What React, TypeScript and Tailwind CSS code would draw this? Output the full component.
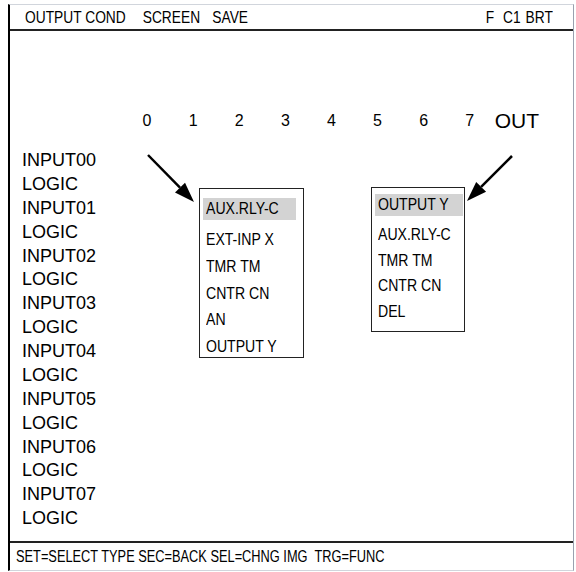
import React from "react";

const sans = "font-['Liberation_Sans',Arial,sans-serif]";

const rows = [0, 1, 2, 3, 4, 5, 6, 7].flatMap((n) => [`INPUT0${n}`, "LOGIC"]);
const leftMenu = ["AUX.RLY-C", "EXT-INP X", "TMR TM", "CNTR CN", "AN", "OUTPUT Y"];
const rightMenu = ["OUTPUT Y", "AUX.RLY-C", "TMR TM", "CNTR CN", "DEL"];

function Arrow({ x1, y1, x2, y2 }: { x1: number; y1: number; x2: number; y2: number }) {
  const a = Math.atan2(y2 - y1, x2 - x1);
  const len = 20;
  const w = 7;
  const bx = x2 - len * Math.cos(a);
  const by = y2 - len * Math.sin(a);
  const px = -Math.sin(a) * w;
  const py = Math.cos(a) * w;
  return (
    <g>
      <line x1={x1} y1={y1} x2={bx} y2={by} stroke="#000" strokeWidth={2.5} />
      <polygon points={`${x2},${y2} ${bx + px},${by + py} ${bx - px},${by - py}`} fill="#000" />
    </g>
  );
}

export default function App() {
  return (
    <div className={`w-[576px] h-[572px] bg-white pt-[4px] pl-[8px] ${sans}`}>
      <div className="relative flex flex-col w-[566px] h-[567px] border-l-2 border-l-black border-t border-r border-b border-t-gray-300 border-r-gray-400 border-b-gray-300 text-black">
        {/* header */}
        <div className="flex items-center justify-between h-[26px] border-b-2 border-[#222] pl-[15px] pr-[20px] pt-[1px] text-[17px] leading-[20px]">
          <span className="inline-flex origin-left scale-x-[0.81] whitespace-pre">
            <span>OUTPUT COND</span>
            <span className="ml-[21px]">SCREEN</span>
            <span className="ml-[15px]">SAVE</span>
          </span>
          <span className="inline-flex origin-right scale-x-[0.81] whitespace-pre">
            <span>F</span>
            <span className="ml-[11px]">C1</span>
            <span className="ml-[6px]">BRT</span>
          </span>
        </div>

        {/* body */}
        <div className="relative flex-1">
          <div className="flex items-end pt-[79px] pl-[114px]">
            {[0, 1, 2, 3, 4, 5, 6, 7].map((n) => (
              <div key={n} className="w-[46.1px] text-center text-[16px] leading-[22px]">
                {n}
              </div>
            ))}
            <div className="ml-[2px] text-[21px] leading-[22px]">OUT</div>
          </div>

          <div className="pl-[12px] pt-[17px] text-[18px] leading-[23.87px]">
            {rows.map((r, i) => (
              <div key={i}>{r}</div>
            ))}
          </div>

          <svg className="absolute inset-0 pointer-events-none" width="564" height="511">
            <Arrow x1={138} y1={124} x2={184} y2={171} />
            <Arrow x1={502} y1={125} x2={457} y2={170} />
          </svg>

          {/* left popup */}
          <div className="absolute left-[189px] top-[157px] w-[105px] h-[170px] border border-[#222] bg-white pt-[9px] pl-[3px] text-[16px]">
            {leftMenu.map((m, i) => (
              <div
                key={i}
                className={`leading-[22px] pl-[3px] ${i === 0 ? "bg-[#d3d3d3] w-[93px] h-[22px] mb-[9px]" : "h-[26.75px]"}`}
              >
                <span className="inline-block origin-left scale-x-[0.88] whitespace-pre">{m}</span>
              </div>
            ))}
          </div>

          {/* right popup */}
          <div className="absolute left-[361px] top-[156px] w-[94px] h-[145px] border border-[#222] bg-white pt-[6px] pl-[3px] text-[16px]">
            {rightMenu.map((m, i) => (
              <div
                key={i}
                className={`leading-[22px] pl-[3px] ${i === 0 ? "bg-[#d3d3d3] w-[88px] h-[22px] mb-[8px]" : "h-[25.7px]"}`}
              >
                <span className="inline-block origin-left scale-x-[0.88] whitespace-pre">{m}</span>
              </div>
            ))}
          </div>
        </div>

        {/* footer */}
        <div className="flex items-center h-[29px] border-t-2 border-[#222] pl-[6px] text-[16px] leading-[20px]">
          <span className="inline-block origin-left scale-x-[0.8] whitespace-pre">SET=SELECT TYPE SEC=BACK SEL=CHNG IMG  TRG=FUNC</span>
        </div>
      </div>
    </div>
  );
}
